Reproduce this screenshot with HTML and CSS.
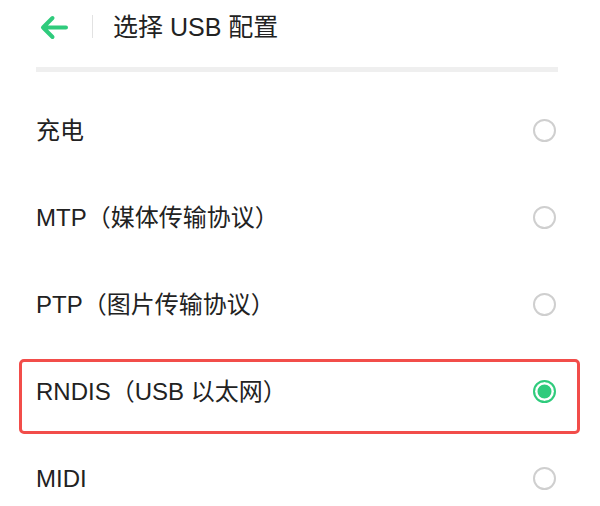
FILE: index.html
```html
<!DOCTYPE html>
<html lang="zh-CN">
<head>
<meta charset="utf-8">
<title>选择 USB 配置</title>
<link rel="stylesheet" href="styles.css">
</head>
<body>
<div class="page">
  <header class="header">
    <svg class="back" width="30" height="30" viewBox="0 0 30 30" aria-hidden="true">
      <path d="M4 15.5 H27 M13.5 6 L4 15.5 L13.5 25" fill="none" stroke="#2fcb7c" stroke-width="4" stroke-linecap="round" stroke-linejoin="round"/>
    </svg>
    <span class="divider"></span>
    <h1 class="title">选择 USB 配置</h1>
  </header>
  <div class="bar"></div>
  <ul class="list">
    <li class="row"><span class="label">充电</span><span class="radio"></span></li>
    <li class="row"><span class="label">MTP（媒体传输协议）</span><span class="radio"></span></li>
    <li class="row"><span class="label">PTP（图片传输协议）</span><span class="radio"></span></li>
    <li class="row row-selected"><span class="label">RNDIS（USB 以太网）</span><span class="radio radio-on"></span></li>
    <li class="row"><span class="label">MIDI</span><span class="radio"></span></li>
  </ul>
</div>
</body>
</html>
```

FILE: styles.css
```css
html, body {
  margin: 0;
  padding: 0;
  background: #ffffff;
}
body {
  font-family: "Liberation Sans", "Noto Sans CJK SC", sans-serif;
  color: #1c1c1c;
  width: 600px;
  height: 506px;
  overflow: hidden;
}
.page {
  width: 600px;
}
.header {
  height: 53px;
  display: flex;
  align-items: center;
  padding-left: 39px;
}
.back {
  display: block;
  flex: none;
}
.divider {
  width: 1px;
  height: 23px;
  background: #e2e2e2;
  margin-left: 23px;
  flex: none;
}
.title {
  margin: 0 0 0 20px;
  font-size: 25px;
  font-weight: normal;
  color: #222222;
  line-height: 30px;
}
.bar {
  margin: 14px 42px 0 36px;
  height: 5px;
  background: #efefef;
}
.list {
  list-style: none;
  margin: 0;
  padding: 15px 0 0 0;
}
.row {
  position: relative;
  height: 87px;
  display: flex;
  align-items: center;
  justify-content: space-between;
  padding: 0 44px 0 36px;
}
.label {
  font-size: 24px;
  line-height: 30px;
  color: #222222;
}
.radio {
  width: 19px;
  height: 19px;
  border: 2px solid #cfcfcf;
  border-radius: 50%;
  flex: none;
  box-sizing: content-box;
}
.radio-on {
  width: 19px;
  height: 19px;
  border: 2.5px solid #2fcb7c;
  background: #2fcb7c;
  box-shadow: inset 0 0 0 2.5px #ffffff;
  background-clip: content-box;
}
.row-selected::after {
  content: "";
  position: absolute;
  left: 19px;
  top: 11px;
  width: 561px;
  height: 75px;
  box-sizing: border-box;
  border: 3px solid #f24d4a;
  border-radius: 5px;
  pointer-events: none;
}
```
